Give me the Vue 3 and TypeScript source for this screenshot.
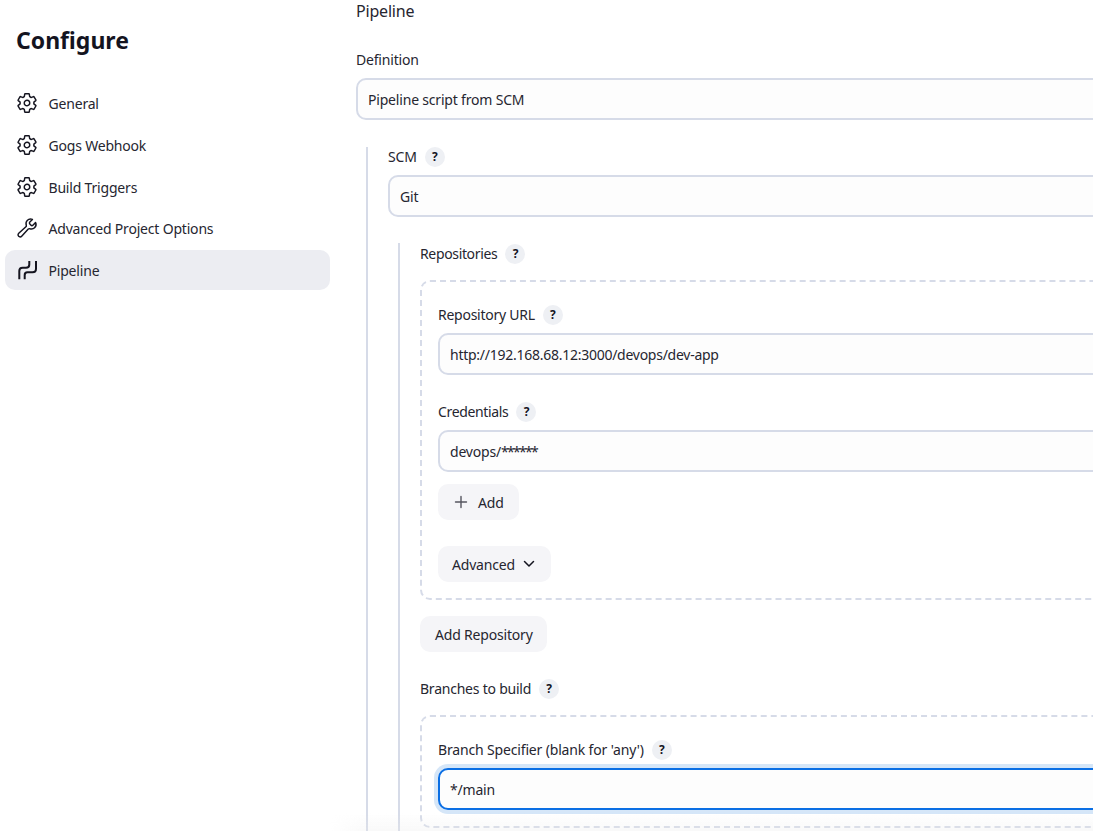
<script setup lang="ts">
const items: { label: string; icon: string; active?: boolean }[] = [
  { label: 'General', icon: 'gear' },
  { label: 'Gogs Webhook', icon: 'gear' },
  { label: 'Build Triggers', icon: 'gear' },
  { label: 'Advanced Project Options', icon: 'wrench' },
  { label: 'Pipeline', icon: 'pipe', active: true },
]
const gear =
  'M262.29 192.31a64 64 0 1057.4 57.4 64.13 64.13 0 00-57.4-57.4zM416.39 256a154.34 154.34 0 01-1.53 20.79l45.21 35.46a10.81 10.81 0 012.45 13.75l-42.77 74a10.81 10.81 0 01-13.14 4.59l-44.9-18.08a16.11 16.11 0 00-15.17 1.75A164.48 164.48 0 01325 400.8a15.94 15.94 0 00-8.82 12.14l-6.73 47.89a11.08 11.08 0 01-10.68 9.17h-85.54a11.11 11.11 0 01-10.69-8.87l-6.72-47.82a16.07 16.07 0 00-9-12.22 155.3 155.3 0 01-21.46-12.57 16 16 0 00-15.11-1.71l-44.89 18.07a10.81 10.81 0 01-13.14-4.58l-42.77-74a10.8 10.8 0 012.45-13.75l38.21-30a16.05 16.05 0 006-14.08c-.36-4.17-.58-8.33-.58-12.5s.21-8.27.58-12.35a16 16 0 00-6.07-13.94l-38.19-30A10.81 10.81 0 0149.48 186l42.77-74a10.81 10.81 0 0113.14-4.59l44.9 18.08a16.11 16.11 0 0015.17-1.75A164.48 164.48 0 01187 111.2a15.94 15.94 0 008.82-12.14l6.73-47.89A11.08 11.08 0 01213.23 42h85.54a11.11 11.11 0 0110.69 8.87l6.72 47.82a16.07 16.07 0 009 12.22 155.3 155.3 0 0121.46 12.57 16 16 0 0015.11 1.71l44.89-18.07a10.81 10.81 0 0113.14 4.58l42.77 74a10.8 10.8 0 01-2.45 13.75l-38.21 30a16.05 16.05 0 00-6.05 14.08c.33 4.14.55 8.3.55 12.47z'
const wrench =
  'M393.87 190a32.1 32.1 0 01-45.25 0l-26.57-26.57a32.09 32.09 0 010-45.26L382.19 58a1 1 0 00-.3-1.64c-38.82-16.64-89.15-8.16-121.11 23.57-30.58 30.35-32.32 76-21.12 115.84a31.93 31.93 0 01-9.06 32.08L64 380a48.17 48.17 0 1068 68l153.86-167a31.93 31.93 0 0131.6-9.13c39.54 10.59 84.54 8.6 114.72-21.19 32.49-32 39.5-88.56 23.75-120.93a1 1 0 00-1.6-.26z'
</script>

<template>
  <div class="page">
    <aside class="side">
      <h1 class="title">Configure</h1>
      <nav class="nav">
        <div v-for="it in items" :key="it.label" class="nav-item" :class="{ active: it.active }">
          <svg v-if="it.icon === 'gear'" class="ico" viewBox="0 0 512 512"><path :d="gear" /></svg>
          <svg v-else-if="it.icon === 'wrench'" class="ico" viewBox="0 0 512 512"><path :d="wrench" /></svg>
          <svg v-else class="ico pipe" viewBox="0 0 22 22">
            <path d="M3.300 20.300V12Q3.300 8.700 6.600 8.700H10Q13.300 8.700 13.300 5.400V2" />
            <path d="M8.700 20.300V16Q8.700 13.300 11.400 13.300H16.500Q20 13.300 20 9.800V2" />
          </svg>
          <span>{{ it.label }}</span>
        </div>
      </nav>
    </aside>

    <main class="main">
      <div class="section-title">Pipeline</div>
      <div class="label first">Definition</div>
      <div class="field">Pipeline script from SCM</div>

      <div class="nest scm">
        <div class="label row">SCM <span class="help">?</span></div>
        <div class="field">Git</div>

        <div class="nest repos">
          <div class="label row tight">Repositories <span class="help">?</span></div>

          <div class="dashed repo-box">
            <div class="label row url">Repository URL <span class="help">?</span></div>
            <div class="field url">http://192.168.68.12:3000/devops/dev-app</div>
            <div class="label row gap-top tight">Credentials <span class="help">?</span></div>
            <div class="field">devops/<span class="stars">******</span></div>
            <button class="btn add">
              <svg class="plus" viewBox="0 0 14 14"><path d="M7 1.500V12.500M1.500 7H12.500" /></svg>
              Add
            </button>
            <button class="btn adv">
              Advanced
              <svg class="chev" viewBox="0 0 12 12"><path d="M1.500 3.500L6 8L10.500 3.500" /></svg>
            </button>
          </div>

          <button class="btn add-repo">Add Repository</button>

          <div class="label row branches">Branches to build <span class="help">?</span></div>

          <div class="dashed branch-box">
            <div class="label row spec">Branch Specifier (blank for 'any') <span class="help">?</span></div>
            <div class="field focus">*/main</div>
          </div>
        </div>
      </div>
    </main>
    <div class="fade"></div>
  </div>
</template>

<style>
html, body { margin: 0; overflow: hidden; background: #fff; }
</style>

<style scoped>
.page {
  position: relative;
  display: flex;
  width: 1093px;
  height: 831px;
  overflow: hidden;
  background: #fff;
  color: #262630;
  font-family: "Noto Sans", "Noto Sans CJK KR", sans-serif;
  font-size: 14px;
  line-height: 20px;
  letter-spacing: -0.19px;
}
.side {
  flex: none;
  width: 325px;
  margin-left: 5px;
}
.title {
  margin: 25px 0 0 11px;
  font-size: 23px;
  line-height: 30px;
  font-weight: 700;
  color: #14141f;
  letter-spacing: 0;
}
.nav {
  display: flex;
  flex-direction: column;
  gap: 1.75px;
  margin-top: 28px;
}
.nav-item {
  display: flex;
  align-items: center;
  gap: 10.5px;
  height: 40px;
  padding-left: 11px;
  border-radius: 10px;
}
.nav-item span { padding-top: 2px; }
.nav-item.active { background: #ecedf2; }
.ico {
  flex: none;
  width: 22px;
  height: 22px;
  fill: none;
  stroke: #14141f;
  stroke-width: 34;
  stroke-linecap: round;
  stroke-linejoin: round;
}
.ico.pipe { stroke-width: 2; stroke-linecap: butt; }
.main {
  flex: none;
  width: 900px;
  margin-left: 26px;
}
.section-title {
  font-size: 16px;
  line-height: 22px;
}
.label.first { margin-top: 28px; margin-bottom: 8px; }
.row {
  display: flex;
  align-items: center;
  gap: 8px;
  height: 20px;
}
.tight { letter-spacing: -0.35px; }
.label.url { letter-spacing: -0.26px; }
.label.spec { letter-spacing: -0.16px; }
.help {
  display: inline-flex;
  align-items: center;
  justify-content: center;
  width: 20px;
  height: 20px;
  border-radius: 50%;
  background: #eef0f4;
  font-size: 12px;
  font-weight: 700;
  color: #14141f;
}
.field {
  box-sizing: border-box;
  height: 42px;
  padding: 2px 10px 0;
  display: flex;
  align-items: center;
  border: 2px solid #d6dbe8;
  border-radius: 10px;
  background: #fdfdfd;
}
.field.url { letter-spacing: -0.26px; }
.stars { letter-spacing: -1.700px; }
.field.focus {
  border-color: #0b6fe4;
  box-shadow: 0 0 0 4px #d5e6f8;
}
.nest {
  border-left: 2px solid #d6dbe8;
}
.scm {
  margin: 27px 0 0 10px;
  padding: 0 0 0 20px;
  height: 700px;
}
.scm > .row { margin-bottom: 8px; }
.repos {
  margin: 26px 0 0 10px;
  padding: 1px 0 0 20px;
  height: 600px;
}
.dashed {
  box-sizing: border-box;
  border: 2px dashed #d6dbe8;
  border-radius: 10px;
  padding: 0 16px;
}
.repo-box {
  margin-top: 16px;
  height: 320px;
  padding-top: 23px;
}
.repo-box .row { margin-bottom: 8px; }
.repo-box .gap-top { margin-top: 27px; }
.btn {
  display: flex;
  align-items: center;
  height: 36px;
  border: 0;
  border-radius: 10px;
  background: #f5f5f8;
  color: inherit;
  font: inherit;
  letter-spacing: inherit;
  padding: 2px 14px 0;
}
.add { margin-top: 12px; gap: 10px; width: 81px; padding: 2px 0 0 16px; }
.adv { margin-top: 26px; gap: 8px; width: 113px; }
.add-repo { margin-top: 16px; width: 127px; padding-left: 15px; }
.plus { width: 14px; height: 14px; margin-top: -2px; fill: none; stroke: #55555f; stroke-width: 1.400; stroke-linecap: round; }
.chev { width: 12px; height: 12px; margin-top: -2px; fill: none; stroke: #14141f; stroke-width: 1.500; stroke-linecap: round; stroke-linejoin: round; }
.branches { margin-top: 27px; letter-spacing: -0.23px; }
.branch-box {
  margin-top: 16px;
  height: 113px;
  padding-top: 23px;
}
.branch-box .row { margin-bottom: 8px; }
.fade {
  position: absolute;
  left: 330px;
  right: 0;
  bottom: 0;
  height: 18px;
  background: linear-gradient(to bottom, rgba(235,235,235,0), rgba(235,235,235,0.3));
  -webkit-mask-image: linear-gradient(to right, transparent, #000 40px);
  mask-image: linear-gradient(to right, transparent, #000 40px);
  pointer-events: none;
}
</style>
